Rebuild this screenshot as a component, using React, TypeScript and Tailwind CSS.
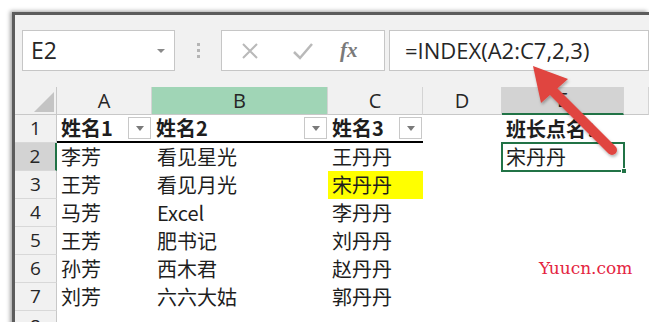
const cols = ["A", "B", "C", "D", "E", ""];

const rows = [
  ["姓名1", "姓名2", "姓名3", "", "班长点名："],
  ["李芳", "看见星光", "王丹丹", "", "宋丹丹"],
  ["王芳", "看见月光", "宋丹丹", "", ""],
  ["马芳", "Excel", "李丹丹", "", ""],
  ["王芳", "肥书记", "刘丹丹", "", ""],
  ["孙芳", "西木君", "赵丹丹", "", ""],
  ["刘芳", "六六大姑", "郭丹丹", "", ""],
];

const cjk = { fontFamily: '"Noto Sans CJK SC", "Noto Sans", sans-serif' };
const ui = { fontFamily: '"Open Sans", "Noto Sans", sans-serif' };

function FilterButton() {
  return (
    <div className="w-[23px] h-[22px] border border-[#c8c8c8] bg-white flex items-center justify-center mr-[1px]">
      <div className="w-0 h-0 border-l-[4px] border-r-[4px] border-t-[5px] border-l-transparent border-r-transparent border-t-[#7a7a7a]" />
    </div>
  );
}

export default function App() {
  return (
    <div className="relative w-[649px] h-[322px] overflow-hidden bg-white">
      <div className="ml-[12px] mt-[12px] h-[320px] border-l-[3px] border-t-[3px] border-[#5c5c5c] bg-[#f1f1f1] shadow-[-2px_-1px_4px_rgba(0,0,0,0.35)]">
        {/* Formula bar */}
        <div className="h-[72px] flex items-start pt-[15px]" style={ui}>
          <div className="ml-[7px] w-[153px] h-[41px] bg-white border border-[#c6c6c6] flex items-center justify-between pl-[8px] pr-[9px]">
            <span className="text-[23px] text-[#262626]">E2</span>
            <div className="w-0 h-0 border-l-[4px] border-r-[4px] border-t-[4px] border-l-transparent border-r-transparent border-t-[#8a8a8a]" />
          </div>
          <div className="w-[46px] h-[41px] flex flex-col items-center justify-center gap-[3px]">
            <div className="w-[3px] h-[3px] bg-[#b5b5b5]" />
            <div className="w-[3px] h-[3px] bg-[#b5b5b5]" />
            <div className="w-[3px] h-[3px] bg-[#b5b5b5]" />
          </div>
          <div className="w-[164px] h-[41px] bg-white border border-[#c6c6c6] flex items-center">
            <svg width="20" height="20" viewBox="0 0 20 20" className="ml-[18px]">
              <path d="M3 3 L17 17 M17 3 L3 17" stroke="#b9b9b9" strokeWidth="2" />
            </svg>
            <svg width="22" height="20" viewBox="0 0 22 20" className="ml-[32px]">
              <path d="M2 11 L8 17 L20 3" stroke="#b9b9b9" strokeWidth="2.5" fill="none" />
            </svg>
            <span
              className="ml-[26px] text-[21px] italic font-bold text-[#7a7a7a]"
              style={{ fontFamily: '"Liberation Serif", serif' }}
            >
              fx
            </span>
          </div>
          <div className="ml-[4px] flex-1 h-[41px] bg-white border border-[#c6c6c6] flex items-center pl-[15px]">
            <span className="text-[22px] text-[#262626]">=INDEX(A2:C7,2,3)</span>
          </div>
        </div>

        {/* Grid */}
        <div className="grid grid-cols-[42px_95px_176px_95px_79px_122px_1fr] bg-white">
          {/* column headers */}
          <div className="h-[28px] bg-[#f1f1f1] border-b border-r border-[#c8c8c8] flex items-end justify-end pr-[2px] pb-[2px]">
            <div className="w-0 h-0 border-b-[20px] border-l-[20px] border-b-[#c4c4c4] border-l-transparent" />
          </div>
          {cols.map((c, k) => (
            <div
              key={k}
              className={
                "h-[28px] flex items-center justify-center text-[20px] text-[#262626] border-r border-[#d4d4d4] " +
                (c === "B"
                  ? "bg-[#a0d5b6] border-b border-b-[#c8c8c8]"
                  : c === "E"
                  ? "bg-[#d3d3d3] border-b-2 border-b-[#217346]"
                  : "bg-[#f1f1f1] border-b border-b-[#c8c8c8]")
              }
              style={ui}
            >
              {c}
            </div>
          ))}

          {rows.map((r, i) => (
            <Row key={i} index={i} cells={r} />
          ))}

          <div className="h-[28px] bg-[#f1f1f1] border-r border-[#c8c8c8] flex justify-center pt-[1px] text-[19px] text-[#262626]" style={ui}>
            8
          </div>
          <div className="col-span-6" />
        </div>
      </div>

      {/* arrow */}
      <svg className="absolute left-0 top-0 pointer-events-none" width="649" height="322" viewBox="0 0 649 322">
        <defs>
          <filter id="sh" x="-20%" y="-20%" width="140%" height="140%">
            <feDropShadow dx="1" dy="2" stdDeviation="1.5" floodColor="#000" floodOpacity="0.3" />
          </filter>
        </defs>
        <g filter="url(#sh)">
          <line x1="612" y1="150" x2="552" y2="90" stroke="#e0443f" strokeWidth="10" strokeLinecap="round" />
          <polygon points="533,66 568,79 541,103" fill="#e0443f" />
        </g>
      </svg>

      <div
        className="absolute left-[539px] top-[256px] text-[17px] text-[#e4243f]"
        style={{ fontFamily: '"DejaVu Serif", serif' }}
      >
        Yuucn.com
      </div>
    </div>
  );
}

function Row({ index, cells }: { index: number; cells: string[] }) {
  const header = index === 0;
  const active = index === 1;
  return (
    <>
      <div
        className={
          "h-[28px] flex items-center justify-center text-[19px] text-[#262626] border-b border-[#d8d8d8] " +
          (active ? "bg-[#d3d3d3] border-r-2 border-r-[#217346]" : "bg-[#f1f1f1] border-r border-r-[#c8c8c8]")
        }
        style={ui}
      >
        {index + 1}
      </div>
      {cells.map((t, j) => {
        const inTable = j < 3;
        let cls = "h-[28px] flex items-center text-[20px] text-[#1e1e1e] ";
        if (header && inTable) cls += "font-bold border-b-2 border-black justify-between pl-[4px] ";
        else cls += j === 1 ? "pl-[5px] " : "pl-[4px] ";
        if (index === 2 && j === 2) cls += "bg-[#ffff00] ";
        if (header && j === 4) cls += "font-bold ";
        if (active && j === 4) cls += "relative outline-2 outline-[#217346] -outline-offset-1 ";
        return (
          <div key={j} className={cls} style={cjk}>
            <span>{t}</span>
            {header && inTable && <FilterButton />}
            {active && j === 4 && (
              <div className="absolute -right-[3px] -bottom-[3px] w-[6px] h-[6px] bg-[#217346] border border-white" />
            )}
          </div>
        );
      })}
      <div />
    </>
  );
}
